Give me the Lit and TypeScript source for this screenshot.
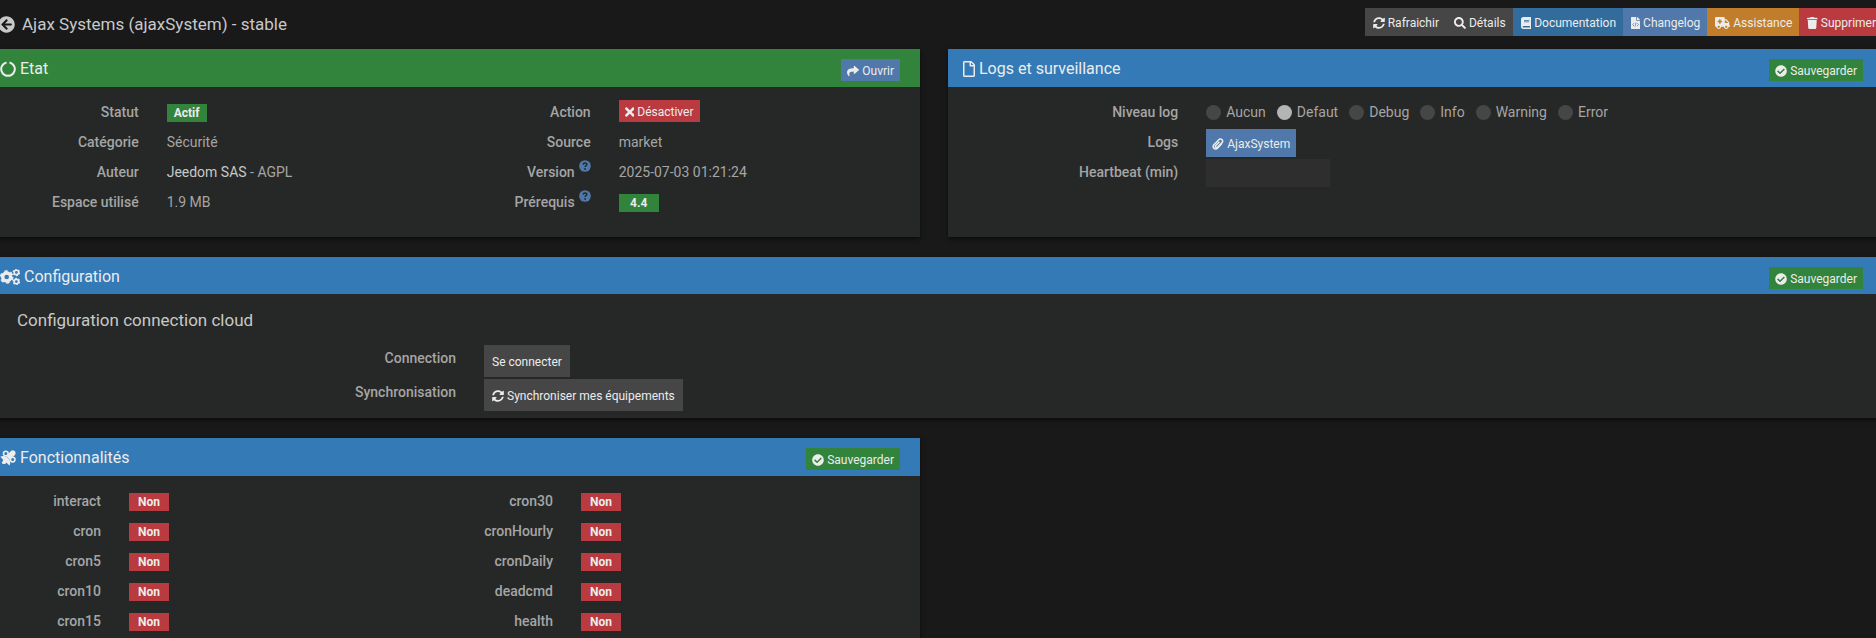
import { LitElement, html, css, svg, nothing } from "lit";
import { customElement, property } from "lit/decorators.js";

interface Glyph {
  box: string;
  width: number;
  art: unknown;
}

const glyphs: Record<string, Glyph> = {
  back: {
    box: "0 0 512 512",
    width: 1,
    art: svg`<path d="M256 504C119 504 8 393 8 256S119 8 256 8s248 111 248 248-111 248-248 248zm28.9-143.6L209.4 288H392c13.3 0 24-10.7 24-24v-16c0-13.3-10.7-24-24-24H209.4l75.5-72.4c9.7-9.3 9.9-24.8.4-34.3l-11-10.9c-9.4-9.4-24.6-9.4-33.9 0L107.7 239c-9.4 9.4-9.4 24.6 0 33.9l132.7 132.7c9.4 9.4 24.6 9.4 33.9 0l11-10.9c9.5-9.5 9.3-25-.4-34.3z"/>`,
  },
  sync: {
    box: "0 0 512 512",
    width: 1,
    art: svg`<path d="M370.72 133.28C339.458 104.008 298.888 87.962 255.848 88c-77.458.068-144.328 53.178-162.791 126.85-1.344 5.363-6.122 9.15-11.651 9.15H24.103c-7.498 0-13.194-6.807-11.807-14.176C33.933 94.924 134.813 8 256 8c66.448 0 126.791 26.136 171.315 68.685L463.03 40.97C478.149 25.851 504 36.559 504 57.941V192c0 13.255-10.745 24-24 24H345.941c-21.382 0-32.09-25.851-16.971-40.971l41.75-41.749zM32 296h134.059c21.382 0 32.09 25.851 16.971 40.971l-41.75 41.75c31.262 29.273 71.835 45.319 114.876 45.28 77.418-.07 144.315-53.144 162.787-126.849 1.344-5.363 6.122-9.15 11.651-9.15h57.304c7.498 0 13.194 6.807 11.807 14.176C478.067 417.076 377.187 504 256 504c-66.448 0-126.791-26.136-171.315-68.685L48.97 471.03C33.851 486.149 8 475.441 8 454.059V320c0-13.255 10.745-24 24-24z"/>`,
  },
  search: {
    box: "0 0 512 512",
    width: 1,
    art: svg`<path d="M505 442.7L405.3 343c-4.5-4.5-10.6-7-17-7H372c27.6-35.3 44-79.7 44-128C416 93.1 322.9 0 208 0S0 93.1 0 208s93.1 208 208 208c48.3 0 92.7-16.4 128-44v16.3c0 6.4 2.5 12.5 7 17l99.7 99.7c9.4 9.4 24.6 9.4 33.9 0l28.3-28.3c9.4-9.4 9.4-24.6.1-34zM208 336c-70.7 0-128-57.2-128-128 0-70.7 57.2-128 128-128 70.7 0 128 57.2 128 128 0 70.7-57.2 128-128 128z"/>`,
  },
  book: {
    box: "0 0 448 512",
    width: 0.875,
    art: svg`<path d="M448 360V24c0-13.3-10.7-24-24-24H96C43 0 0 43 0 96v320c0 53 43 96 96 96h328c13.3 0 24-10.7 24-24v-16c0-7.5-3.5-14.3-8.9-18.7-4.2-15.4-4.2-59.3 0-74.7 5.4-4.3 8.9-11.1 8.9-18.6zM128 134c0-3.3 2.7-6 6-6h212c3.3 0 6 2.7 6 6v20c0 3.3-2.7 6-6 6H134c-3.3 0-6-2.7-6-6v-20zm0 64c0-3.3 2.7-6 6-6h212c3.3 0 6 2.7 6 6v20c0 3.3-2.7 6-6 6H134c-3.3 0-6-2.7-6-6v-20zm253.4 250H96c-17.7 0-32-14.3-32-32 0-17.6 14.4-32 32-32h285.4c-1.9 17.1-1.9 46.9 0 64z"/>`,
  },
  code: {
    box: "0 0 384 512",
    width: 0.75,
    art: svg`<path d="M384 121.9v6.1H256V0h6.1c6.4 0 12.5 2.5 17 7l97.9 98c4.5 4.5 7 10.6 7 16.9zM248 160c-13.2 0-24-10.8-24-24V0H24C10.7 0 0 10.7 0 24v464c0 13.3 10.7 24 24 24h336c13.3 0 24-10.7 24-24V160H248z"/><path class="cut" d="M130 262l-62 62 62 62M254 262l62 62-62 62M214 236l-44 176"/>`,
  },
  ambulance: {
    box: "0 0 640 512",
    width: 1.25,
    art: svg`<path d="M624 352h-16V243.900c0-12.700-5.100-24.900-14.100-33.900L494 110.100c-9-9-21.200-14.100-33.900-14.100H416V48c0-26.500-21.500-48-48-48H48C21.500 0 0 21.500 0 48v320c0 26.500 21.500 48 48 48h16c0 53 43 96 96 96s96-43 96-96h128c0 53 43 96 96 96s96-43 96-96h48c8.800 0 16-7.200 16-16v-32c0-8.800-7.200-16-16-16zM160 464c-26.500 0-48-21.500-48-48s21.500-48 48-48 48 21.500 48 48-21.500 48-48 48zm144-248c0 4.400-3.600 8-8 8h-56v56c0 4.400-3.600 8-8 8h-48c-4.400 0-8-3.600-8-8v-56h-56c-4.400 0-8-3.600-8-8v-48c0-4.400 3.600-8 8-8h56v-56c0-4.400 3.600-8 8-8h48c4.400 0 8 3.600 8 8v56h56c4.400 0 8 3.600 8 8v48zm176 248c-26.500 0-48-21.500-48-48s21.500-48 48-48 48 21.500 48 48-21.500 48-48 48zm80-208H416V144h44.100l99.900 99.900V256z"/>`,
  },
  trash: {
    box: "0 0 448 512",
    width: 0.875,
    art: svg`<path d="M432 32H312l-9.400-18.700A24 24 0 0 0 281.100 0H166.800a23.720 23.720 0 0 0-21.400 13.300L136 32H16A16 16 0 0 0 0 48v32a16 16 0 0 0 16 16h416a16 16 0 0 0 16-16V48a16 16 0 0 0-16-16zM53.200 467a48 48 0 0 0 47.900 45h245.800a48 48 0 0 0 47.900-45L416 128H32z"/>`,
  },
  check: {
    box: "0 0 512 512",
    width: 1,
    art: svg`<path d="M504 256c0 136.967-111.033 248-248 248S8 392.967 8 256 119.033 8 256 8s248 111.033 248 248zM227.314 387.314l184-184c6.248-6.248 6.248-16.379 0-22.627l-22.627-22.627c-6.248-6.249-16.379-6.249-22.628 0L216 308.118l-70.059-70.059c-6.248-6.248-16.379-6.248-22.628 0l-22.627 22.627c-6.248 6.248-6.248 16.379 0 22.627l104 104c6.249 6.249 16.379 6.249 22.628.001z"/>`,
  },
  share: {
    box: "0 0 512 512",
    width: 1,
    art: svg`<path d="M503.691 189.836L327.687 37.851C312.281 24.546 288 35.347 288 56.015v80.053C127.371 137.907 0 170.100 0 322.326c0 61.441 39.581 122.309 83.333 154.132 13.653 9.931 33.111-2.533 28.077-18.631C66.066 312.814 132.917 274.316 288 272.085V360c0 20.700 24.300 31.453 39.687 18.164l176.004-152c11.071-9.562 11.086-26.753 0-36.328z"/>`,
  },
  times: {
    box: "0 0 352 512",
    width: 0.6875,
    art: svg`<path d="M242.720 256l100.070-100.070c12.280-12.280 12.280-32.190 0-44.480l-22.240-22.240c-12.280-12.280-32.190-12.280-44.480 0L176 189.280 75.930 89.210c-12.280-12.280-32.190-12.280-44.480 0L9.210 111.450c-12.280 12.280-12.280 32.190 0 44.480L109.280 256 9.210 356.070c-12.280 12.280-12.280 32.190 0 44.480l22.240 22.240c12.280 12.280 32.200 12.280 44.480 0L176 322.720l100.070 100.070c12.280 12.280 32.200 12.280 44.480 0l22.240-22.240c12.280-12.280 12.280-32.190 0-44.480L242.720 256z"/>`,
  },
  help: {
    box: "0 0 16 16",
    width: 1,
    art: svg`<circle cx="8" cy="8" r="7.800"/><path class="cut round" d="M5.700 6.200C5.900 3.200 10.500 3.300 10.400 6.100 10.300 7.700 8.100 7.700 8.100 9.400"/><circle class="hole" cx="8.100" cy="12" r="1.200"/>`,
  },
  notch: {
    box: "0 0 16 16",
    width: 1,
    art: svg`<path class="line" d="M9.500 1.400A6.800 6.800 0 1 1 6.500 1.400"/>`,
  },
  file: {
    box: "0 0 384 512",
    width: 0.75,
    art: svg`<path d="M369.900 97.900L286 14C277 5 264.800-.1 252.100-.1H48C21.500 0 0 21.500 0 48v416c0 26.500 21.500 48 48 48h288c26.500 0 48-21.500 48-48V131.900c0-12.700-5.100-25-14.100-34zM332.100 128H256V51.900l76.100 76.100zM48 464V48h160v104c0 13.300 10.700 24 24 24h104v288H48z"/>`,
  },
  clip: {
    box: "0 0 16 16",
    width: 1,
    art: svg`<path class="line" d="M13 7.500L7.600 13.300C5.800 15.200 2.900 14.900 1.900 12.900 1.200 11.500 1.500 10.200 2.500 9.100L9 2.400C10.300 1.100 12.300 1.100 13.400 2.300 14.500 3.500 14.400 5.200 13.200 6.500L7.400 12.200C6.600 13 5.500 12.900 4.900 12.300 4.200 11.500 4.300 10.600 5 9.900L10 4.900"/>`,
  },
  cogs: {
    box: "0 0 20 16",
    width: 1.25,
    art: svg`<circle class="gear" cx="6.700" cy="8" r="4"/><circle class="teeth" cx="6.700" cy="8" r="5.800"/><circle class="small" cx="16.400" cy="3.400" r="2.200"/><circle class="small-teeth" cx="16.400" cy="3.400" r="3.200"/><circle class="small" cx="16.400" cy="12.600" r="2.200"/><circle class="small-teeth" cx="16.400" cy="12.600" r="3.200"/>`,
  },
  satellite: {
    box: "0 0 16 16",
    width: 1,
    art: svg`<path d="M.3 6.800C2.500 5.400 5.400 5.700 7.200 7.400L8.800 9C10.600 11 10.700 13.500 9.400 15.600L6.600 12.800 4.900 14.100 2.900 13.900 1.700 12.800 3.300 9.900z"/><path d="M6 6L11.200.8C12.400 0 13.600 0 14.600 1 15.700 2.100 15.900 3.500 15.100 4.700L10 10z"/><circle class="loop" cx="5.800" cy="3.500" r="2.300"/><circle class="loop" cx="12.700" cy="9.600" r="2.300"/>`,
  },
};

@customElement("ui-icon")
export class UiIcon extends LitElement {
  @property() name = "check";
  @property({ type: Number }) size = 12;

  static styles = css`
    :host { display: inline-flex; flex: none; }
    svg { display: block; fill: currentColor; }
    .cut { fill: none; stroke: #5078aa; stroke-width: 30; }
    .cut.round { stroke-width: 2; stroke: #262827; }
    .hole { fill: #262827; }
    .line { fill: none; stroke: currentColor; stroke-width: 2; stroke-linecap: butt; }
    .gear { fill: none; stroke: currentColor; stroke-width: 3.4; }
    .teeth { fill: none; stroke: currentColor; stroke-width: 2; stroke-dasharray: 3.2 2.874; }
    .small { fill: none; stroke: currentColor; stroke-width: 1.6; }
    .small-teeth { fill: none; stroke: currentColor; stroke-width: 1.2; stroke-dasharray: 1.8 1.551; }
    .loop { fill: #347ab6; stroke: currentColor; stroke-width: 1.6; }
  `;

  render() {
    const g = glyphs[this.name];
    return html`<svg viewBox=${g.box} width=${g.width * this.size} height=${this.size} aria-hidden="true">${g.art}</svg>`;
  }
}

const toolbar = [
  { icon: "sync", text: "Rafraichir", tone: "plain" },
  { icon: "search", text: "Détails", tone: "plain tight" },
  { icon: "book", text: "Documentation", tone: "primary" },
  { icon: "code", text: "Changelog", tone: "info" },
  { icon: "ambulance", text: "Assistance", tone: "warning" },
  { icon: "trash", text: "Supprimer", tone: "danger" },
];

const levels = ["Aucun", "Defaut", "Debug", "Info", "Warning", "Error"];

const features = [
  ["interact", "cron", "cron5", "cron10", "cron15"],
  ["cron30", "cronHourly", "cronDaily", "deadcmd", "health"],
];

@customElement("app-root")
export class AppRoot extends LitElement {
  static styles = css`
    :host {
      display: block;
      overflow: hidden;
      height: 100vh;
      background: #191919;
      color: #a5a5a5;
      font: 14px/20px Roboto, sans-serif;
    }
    * { box-sizing: border-box; }
    .page { margin: 0 -7px 0 -15px; }
    .top {
      display: flex;
      justify-content: space-between;
      align-items: flex-start;
      padding: 8px 0 13px 13px;
    }
    h1, h2, h3 { margin: 0; font-weight: 400; }
    h1, h3 { font-size: 17px; line-height: 24px; color: #c8c8c8; }
    h1 { display: flex; align-items: center; gap: 7px; padding-top: 4px; }
    .tools { display: flex; }
    .btn {
      display: inline-flex;
      align-items: center;
      gap: 3px;
      height: 28px;
      padding: 1px 6px 0;
      border: 0;
      border-radius: 0;
      color: #ececec;
      font: 12px/18px Roboto, sans-serif;
      white-space: nowrap;
      cursor: pointer;
      text-decoration: none;
    }
    .tools .btn { padding: 1px 7px 0 8px; }
    .btn.small { height: 22px; }
    .btn.tall { height: 32px; padding: 1px 8px 0; }
    .plain { background: #464646; }
    .primary { background: #326c9c; }
    .info { background: #5078aa; }
    .warning { background: #c27d2b; }
    .danger { background: #b93a3f; }
    .success { background: #32833b; }

    .grid { display: grid; grid-template-columns: 1fr 1fr; gap: 20px 28px; }
    .wide { grid-column: 1 / -1; }
    .panel {
      display: flex;
      flex-direction: column;
      background: #262827;
      box-shadow: 0 2px 4px rgba(0, 0, 0, 0.55);
    }
    .head {
      display: flex;
      justify-content: space-between;
      align-items: flex-start;
      padding: 10px 20px 6px 15px;
      background: #347ab6;
      color: #ececec;
    }
    .head.ok { background: #32833b; }
    .head h2 { display: flex; align-items: center; gap: 4px; font-size: 16px; line-height: 20px; }
    .body { padding: 10px 14px 20px 17px; }
    .body.single { padding-right: 9px; }
    .halves { display: grid; grid-template-columns: 1fr 1fr; }
    .row { display: grid; grid-template-columns: 1fr 2fr; min-height: 30px; }
    .row.quarter { grid-template-columns: 1fr 3fr; }
    .row > * { padding: 5px 14px; min-width: 0; }
    .row > .ctl { padding-top: 2px; padding-bottom: 0; display: flex; align-items: flex-start; }
    .row > .ctl.low { padding-top: 3px; }
    .row > .tagged { padding-top: 7px; display: flex; align-items: flex-start; }
    .label {
      display: flex;
      justify-content: flex-end;
      align-items: flex-start;
      gap: 4px;
      font-weight: 500;
    }
    .label ui-icon { margin-top: -2px; color: #5078aa; }
    .strong { color: #c8c8c8; text-decoration: none; }
    .tag {
      min-width: 40px;
      height: 18px;
      padding: 0 7px;
      color: #ececec;
      font-size: 12px;
      line-height: 18px;
      font-weight: 700;
      text-align: center;
    }
    .radios { display: flex; gap: 11px; }
    .radios label { display: flex; align-items: center; gap: 5px; }
    input[type="radio"] {
      appearance: none;
      width: 15px;
      height: 15px;
      margin: 0;
      border-radius: 50%;
      background: #464646;
    }
    input[type="radio"]:checked { background: #b4b4b4; }
    .field {
      width: 19%;
      height: 28px;
      border: 0;
      padding: 0 8px;
      background: #2e2e2e;
      color: inherit;
      font: inherit;
    }
    .config .head { padding-bottom: 5px; }
    .config .body { padding-top: 14px; padding-bottom: 5px; }
    .config h3 { padding: 0 15px 13px; }
    .config .row { min-height: 34px; }
    .config .row > .label { padding-top: 3px; }
    .config .row > .ctl { padding-top: 0; }
  `;

  private save() {
    return html`<button class="btn small success" type="button"><ui-icon name="check"></ui-icon>Sauvegarder</button>`;
  }

  private head(icon: string, text: string, action: unknown, tone = "") {
    return html`<header class="head ${tone}">
      <h2><ui-icon name=${icon} size="16"></ui-icon>${text}</h2>
      ${action}
    </header>`;
  }

  private row(label: string, value: unknown, kind = "", help = false) {
    return html`<div class="row">
      <div class="label">${label}${help ? html`<ui-icon name="help"></ui-icon>` : nothing}</div>
      <div class=${kind}>${value}</div>
    </div>`;
  }

  render() {
    return html`<main class="page">
      <div class="top">
        <h1><ui-icon name="back" size="17"></ui-icon>Ajax Systems (ajaxSystem) - stable</h1>
        <div class="tools">
          ${toolbar.map((t) => html`<button type="button" class="btn ${t.tone}"><ui-icon name=${t.icon}></ui-icon>${t.text}</button>`)}
        </div>
      </div>
      <div class="grid">
        <section class="panel">
          ${this.head("notch", "Etat", html`<button class="btn small info" type="button"><ui-icon name="share"></ui-icon>Ouvrir</button>`, "ok")}
          <div class="body halves">
            <div>
              ${this.row("Statut", html`<span class="tag success">Actif</span>`, "tagged")}
              ${this.row("Catégorie", "Sécurité")}
              ${this.row("Auteur", html`<a class="strong" href="#">Jeedom SAS</a> - AGPL`)}
              ${this.row("Espace utilisé", "1.9 MB")}
            </div>
            <div>
              ${this.row("Action", html`<button class="btn small danger" type="button"><ui-icon name="times" size="14"></ui-icon>Désactiver</button>`, "ctl low")}
              ${this.row("Source", "market")}
              ${this.row("Version", "2025-07-03 01:21:24", "", true)}
              ${this.row("Prérequis", html`<span class="tag success">4.4</span>`, "tagged", true)}
            </div>
          </div>
        </section>

        <section class="panel">
          ${this.head("file", "Logs et surveillance", this.save())}
          <div class="body single">
            <div class="row quarter">
              <div class="label" id="level">Niveau log</div>
              <div class="radios" role="radiogroup" aria-labelledby="level">
                ${levels.map((l) => html`<label><input type="radio" name="level" .checked=${l === "Defaut"} />${l}</label>`)}
              </div>
            </div>
            <div class="row quarter">
              <div class="label">Logs</div>
              <div class="ctl"><a class="btn info" href="#"><ui-icon name="clip"></ui-icon>AjaxSystem</a></div>
            </div>
            <div class="row quarter">
              <label class="label" for="beat">Heartbeat (min)</label>
              <div class="ctl"><input class="field" id="beat" type="text" /></div>
            </div>
          </div>
        </section>

        <section class="panel wide config">
          ${this.head("cogs", "Configuration", this.save())}
          <div class="body single">
            <h3>Configuration connection cloud</h3>
            <div class="row quarter">
              <div class="label">Connection</div>
              <div class="ctl"><button class="btn tall plain" type="button">Se connecter</button></div>
            </div>
            <div class="row quarter">
              <div class="label">Synchronisation</div>
              <div class="ctl"><button class="btn tall plain" type="button"><ui-icon name="sync"></ui-icon>Synchroniser mes équipements</button></div>
            </div>
          </div>
        </section>

        <section class="panel">
          ${this.head("satellite", "Fonctionnalités", this.save())}
          <div class="body halves">
            ${features.map((col) => html`<div>
              ${col.map((f) => html`<div class="row quarter">
                <div class="label">${f}</div>
                <div class="tagged"><span class="tag danger">Non</span></div>
              </div>`)}
            </div>`)}
          </div>
        </section>
      </div>
    </main>`;
  }
}
